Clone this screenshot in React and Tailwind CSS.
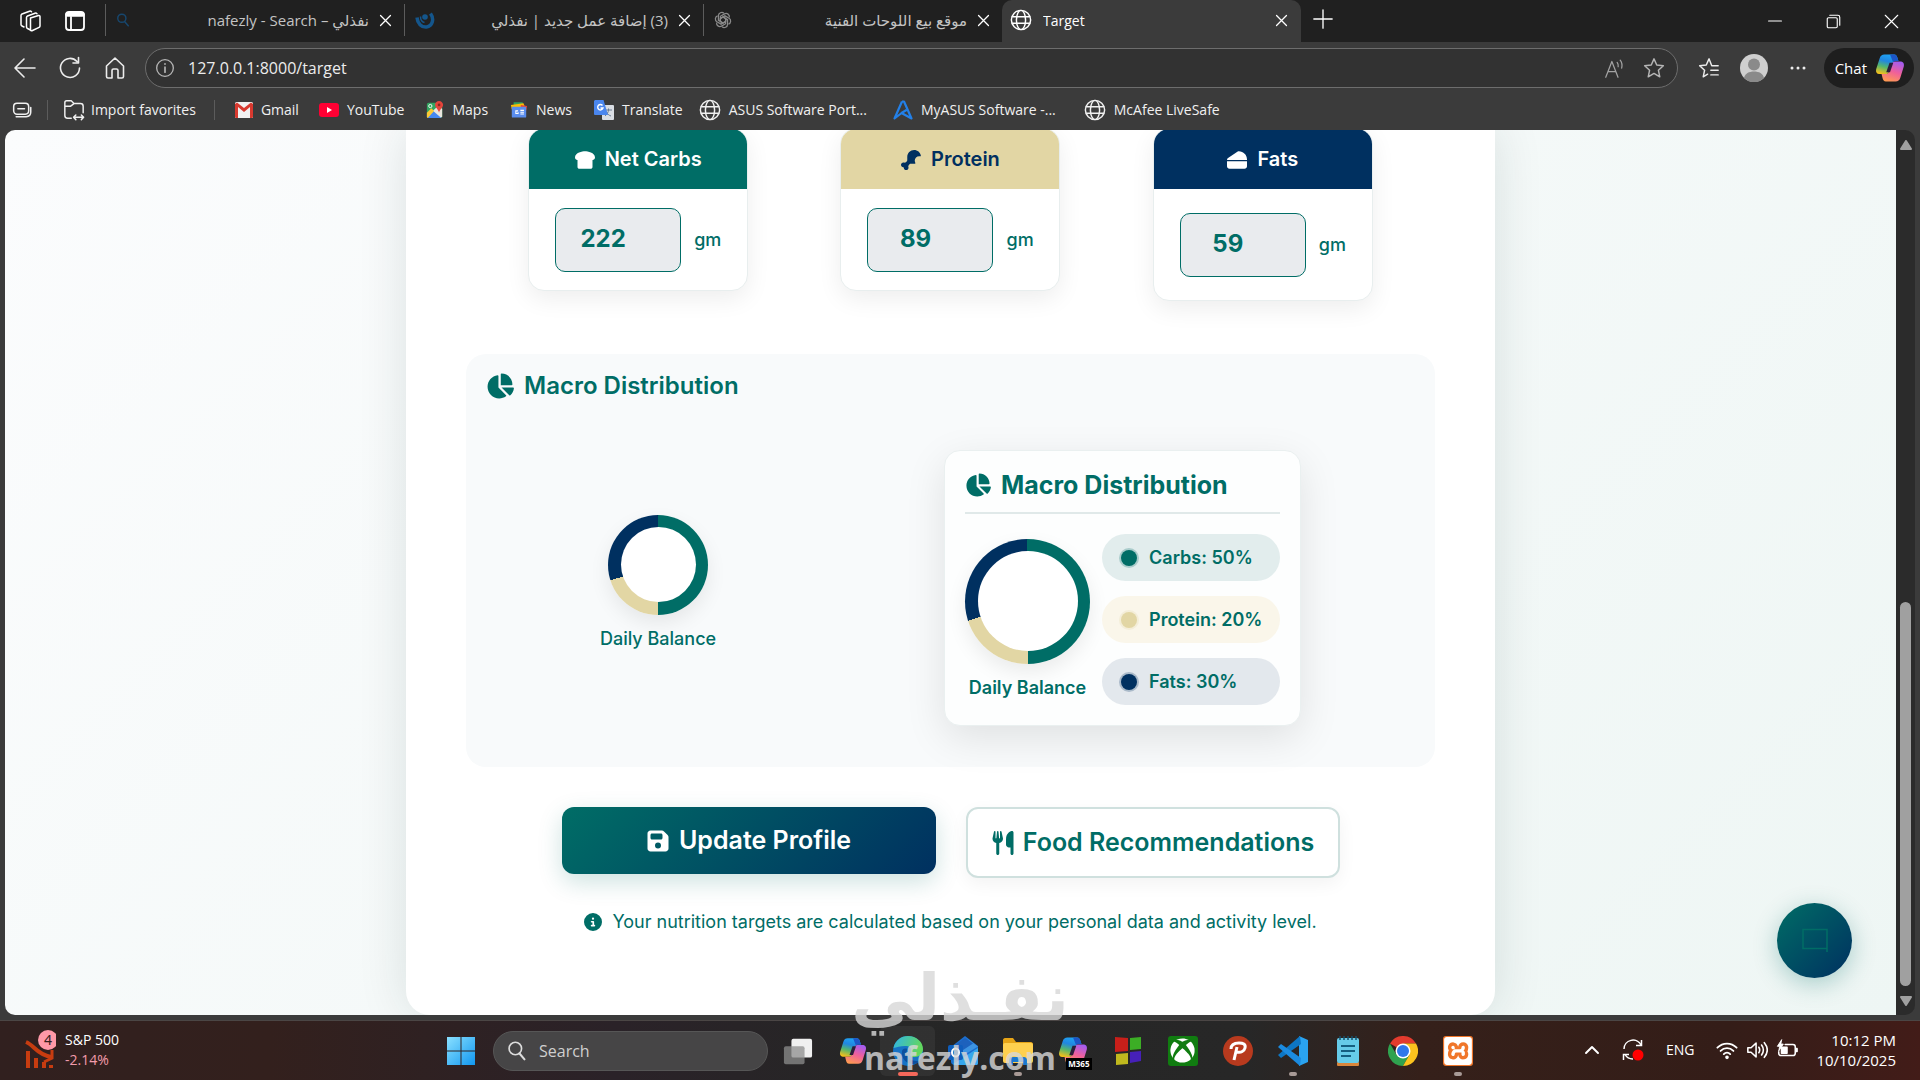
import React, { useState } from "react";
import {
  FaBreadSlice,
  FaDrumstickBite,
  FaCheese,
  FaChartPie,
  FaFloppyDisk,
  FaUtensils,
  FaCircleInfo,
  FaXbox,
} from "react-icons/fa6";
import { SiXampp } from "react-icons/si";

/* ---------- browser icons ---------- */

const Line = ({ size = 22, width = 1.4, className = "", children }) => (
  <svg
    width={size}
    height={size}
    viewBox="0 0 24 24"
    fill="none"
    stroke="currentColor"
    strokeWidth={width}
    strokeLinecap="round"
    strokeLinejoin="round"
    className={`shrink-0 ${className}`}
  >
    {children}
  </svg>
);

const GlobeIcon = () => (
  <Line size={22} width={1.6}>
    <circle cx="12" cy="12" r="10.500" />
    <ellipse cx="12" cy="12" rx="5" ry="10.500" />
    <path d="M2.500 8.500h19M2.500 15.500h19" />
  </Line>
);

const CloseIcon = ({ size = 17 }) => (
  <Line size={size} width={1.8}>
    <path d="M5 5l14 14M19 5L5 19" />
  </Line>
);

const WorkspacesIcon = () => (
  <Line size={24} width={1.5}>
    <path d="M12.500 9l8-2.500c.8-.2 1.500.3 1.500 1v9.500c0 .6-.3 1-.9 1.300l-7.100 3.400c-.8.3-1.500 0-1.500-.9z" />
    <path d="M12.500 21l-3-1.500c-.8-.4-1-.8-1-1.500V8.500c0-.8.4-1.200 1-1.500l7.500-2.800c.8-.3 1.500 0 2 .5" />
    <path d="M6 18l-2-1c-.8-.4-1-.8-1-1.500V6.500c0-.8.4-1.200 1-1.500l7.500-2.800c.8-.3 1.500 0 2 .5" />
  </Line>
);

const TabActionsIcon = () => (
  <Line size={24} width={1.8}>
    <rect x="3" y="3" width="18" height="18" rx="3" />
    <path d="M4.500 5.500h15" strokeWidth="4.500" />
    <path d="M8 8v13" />
  </Line>
);

const CopilotIcon = ({ size = 32, id }) => (
  <svg width={size} height={size} viewBox="0 0 32 32" className="shrink-0">
    <defs>
      <linearGradient id={`${id}a`} x1="0.600" y1="0" x2="0.300" y2="1">
        <stop offset="0" stopColor="#1fa5f5" />
        <stop offset="0.350" stopColor="#2186e0" />
        <stop offset="0.650" stopColor="#55b66c" />
        <stop offset="1" stopColor="#f2c01c" />
      </linearGradient>
      <linearGradient id={`${id}b`} x1="0.700" y1="0" x2="0.300" y2="1">
        <stop offset="0" stopColor="#a45cf0" />
        <stop offset="0.500" stopColor="#f0609a" />
        <stop offset="1" stopColor="#ff9a52" />
      </linearGradient>
    </defs>
    <path d="M15.500 1.500h5c2 0 2.800 1.500 3.400 3.500L25 8.500h-3.500c-1.500 0-2.500 1-3 2.500L15 20c-.6 1.800-1.600 2.500-3.200 2.500H5.500c-3.500 0-5-2-4.200-5.500L5 5.500c.8-2.700 2.500-4 5-4z" fill={`url(#${id}a)`} />
    <path d="M16.500 30.500h-5c-2 0-2.800-1.500-3.400-3.500L7 22.500h4.500c1.800 0 2.900-1 3.500-2.500l2.800-8.500c.5-1.500 1.500-2.500 3.500-2.500h5.200c3.500 0 5 2 4.200 5.500L27 26.500c-.8 2.700-2.500 4-5 4z" fill={`url(#${id}b)`} />
    <path d="M15.500 10.500h4l-3.500 10h-4z" fill="#2b1d3b" />
    <path d="M16 1.500h4.500c2 0 2.800 1.500 3.400 3.500L25 8.500h-3.500c-1 0-1.800.4-2.300 1z" fill="#1c56c8" />
  </svg>
);

const GmailIcon = () => (
  <svg width="18" height="16" viewBox="0 0 18 16" className="shrink-0">
    <rect width="18" height="16" rx="1.500" fill="#f1f1f1" />
    <path d="M0 2v12.500c0 .8.600 1.500 1.500 1.500H3V5l6 5 6-5v11h1.500c.9 0 1.500-.7 1.500-1.500V2L16 .5 9 6 2 .5z" fill="#d8392f" />
  </svg>
);

const YouTubeIcon = () => (
  <svg width="20" height="14" viewBox="0 0 20 14" className="shrink-0">
    <rect width="20" height="14" rx="3" fill="#ff0033" />
    <path d="M8 4l5 3-5 3z" fill="#fff" />
  </svg>
);

const MapsIcon = () => (
  <svg width="18" height="18" viewBox="0 0 20 20" className="shrink-0">
    <rect x="1" y="2" width="17" height="17" rx="2" fill="#33a561" />
    <path d="M1 17L14 5l4 4v8.500L16 19H3z" fill="#e9e6de" />
    <path d="M8 11l9 8H1z" fill="#4688f1" />
    <path d="M1 13l5-5 3 3-7 8-1-1z" fill="#fcc934" />
    <path d="M14.500 0C17 0 19 2 19 4.300c0 3-3.500 4.700-4.500 8.700-1-4-4.500-5.700-4.500-8.700C10 2 12 0 14.500 0z" fill="#e5443b" />
    <circle cx="14.500" cy="4.400" r="1.500" fill="#8c2a22" />
    <circle cx="4.800" cy="5.600" r="1.800" fill="none" stroke="#fff" />
  </svg>
);

const NewsIcon = () => (
  <svg width="18" height="17" viewBox="0 0 20 18" className="shrink-0">
    <path d="M4 1h10l1 5H4z" fill="#34a060" />
    <path d="M1 4l14-2 2 5-15 2z" fill="#fbbc04" />
    <path d="M12 4l7 1-1 5h-6z" fill="#ea4335" />
    <rect x="2" y="6" width="16" height="12" rx="1" fill="#5a8dee" />
    <path d="M9 10.500H6.500v3H9v-1.500M11.500 10h4M11.500 12h4M11.500 14h4" stroke="#fff" fill="none" strokeWidth="1.200" />
  </svg>
);

const TranslateIcon = () => (
  <svg width="20" height="20" viewBox="0 0 20 20" className="shrink-0">
    <rect x="8" y="5" width="12" height="15" rx="1" fill="#d9dde3" />
    <path d="M11 10h7M14.500 8.500V10c0 2-1.500 4.500-3.500 6M12.500 12c.8 1.800 2.500 3.500 4.500 4" stroke="#6a7d92" fill="none" />
    <path d="M1 0h8.500L14 15H1a1 1 0 01-1-1V1z" fill="#4a86ee" />
    <path d="M8.500 5.500A2.700 2.700 0 109 8H6.500" stroke="#fff" strokeWidth="1.400" fill="none" />
  </svg>
);

const AsusIcon = () => (
  <svg width="20" height="20" viewBox="0 0 20 20" className="shrink-0">
    <path d="M9 1.500L1.500 18.500l6.500-5M9 1.500h2l7.500 17-10-5.500 5-3" fill="none" stroke="#2380e8" strokeWidth="2.200" strokeLinejoin="round" />
  </svg>
);

/* ---------- tabs ---------- */

const tabs = [
  {
    title: "nafezly - Search – نفذلي",
    dir: "ltr",
    icon: (
      <Line size={14} width={2.5} className="text-[#17476e]">
        <circle cx="10" cy="9" r="7" />
        <path d="M15 15l6 7" />
      </Line>
    ),
  },
  {
    title: "(3) إضافة عمل جديد | نفذلي",
    dir: "rtl",
    icon: (
      <svg width="20" height="20" viewBox="0 0 20 20" className="shrink-0">
        <path d="M2 7.500c.5 6 4.500 10 9.500 9.500 6-.7 8-8 4-13.500" stroke="#14568c" strokeWidth="3.500" fill="none" />
        <path d="M5.500 6.500c0 3 1.500 5.500 4 6" stroke="#14568c" strokeWidth="1.500" fill="none" />
        <circle cx="10" cy="7" r="2.800" fill="#14568c" />
      </svg>
    ),
  },
  {
    title: "موقع بيع اللوحات الفنية",
    dir: "rtl",
    icon: (
      <svg width="18" height="18" viewBox="0 0 24 24" fill="none" stroke="#8a8a8a" strokeWidth="1.700" className="shrink-0">
        {[0, 60, 120, 180, 240, 300].map((deg) => (
          <path key={deg} d="M8.500 14V7l5.500-3.200a4.500 4.500 0 016.500 4.700M8.500 10l3.500-2 3.500 2" transform={`rotate(${deg} 12 12)`} />
        ))}
      </svg>
    ),
  },
];

const TabStrip = () => (
  <div className="flex h-[42px] shrink-0 items-stretch bg-[#202020] text-[14px] text-[#c4c4c4]">
    <div className="flex w-[105px] shrink-0 items-center gap-[21px] pl-[18px] text-white">
      <button aria-label="Workspaces"><WorkspacesIcon /></button>
      <button aria-label="Tab actions"><TabActionsIcon /></button>
    </div>
    {tabs.map((tab) => (
      <div key={tab.title} className="flex h-10 w-full max-w-[299px] items-center">
        <div className="h-8 w-px bg-[#5c5c5c]" />
        <div className="flex min-w-0 flex-1 items-center gap-[8px] pr-[10px] pl-[10px]">
          {tab.icon}
          <span dir={tab.dir} className="min-w-0 flex-1 truncate text-right text-[15px]">{tab.title}</span>
          <button aria-label="Close tab" className="text-white"><CloseIcon /></button>
        </div>
      </div>
    ))}
    <div className="flex w-full max-w-[299px] items-center gap-[11px] rounded-t-[10px] bg-[#3b3b3b] pr-[11px] pb-[2px] pl-2 text-white">
      <GlobeIcon />
      <span className="flex-1 truncate">Target</span>
      <button aria-label="Close tab"><CloseIcon /></button>
    </div>
    <button aria-label="New tab" className="px-3 pb-1 text-white">
      <Line size={20} width={1.6}><path d="M12 1v22M1 12h22" /></Line>
    </button>
    <div className="ml-auto flex text-white">
      <button aria-label="Minimize" className="flex w-[58px] items-center justify-center">
        <Line size={14} width={2}><path d="M1 12h22" /></Line>
      </button>
      <button aria-label="Restore" className="flex w-[58px] items-center justify-center">
        <Line size={15} width={1.8}>
          <rect x="2" y="6" width="16" height="16" rx="2" />
          <path d="M6 2h13c2 0 3 1 3 3v13" />
        </Line>
      </button>
      <button aria-label="Close" className="flex w-[58px] items-center justify-center">
        <Line size={15} width={1.8}><path d="M2 2l20 20M22 2L2 22" /></Line>
      </button>
    </div>
  </div>
);

/* ---------- toolbar ---------- */

const Toolbar = () => {
  const [url, setUrl] = useState("127.0.0.1:8000/target");

  return (
    <div className="flex h-[52px] shrink-0 items-center pr-[6px] pl-[13px] text-[#ececec]">
      <div className="flex w-[132px] shrink-0 items-center gap-[21px]">
        <button aria-label="Back">
          <Line size={24} width={1.6}><path d="M22 12H2.500M11 3l-9 9 9 9" /></Line>
        </button>
        <button aria-label="Refresh">
          <Line size={24} width={1.6}><path d="M21.500 12A9.500 9.500 0 1119 5.500M20.500 1.500V7H15" /></Line>
        </button>
        <button aria-label="Home">
          <Line size={24} width={1.6}><path d="M3.500 10L12 2l8.500 8v10.500c0 .8-.7 1.500-1.500 1.500h-4v-7.500c0-.8-.7-1.500-1.500-1.500h-3c-.8 0-1.500.7-1.500 1.500V22H5c-.8 0-1.500-.7-1.500-1.500z" /></Line>
        </button>
      </div>
      <div className="flex h-10 flex-1 items-center rounded-full border border-[#6d6d6d] bg-[#323232] pr-3 pl-[9px]">
        <Line size={20} width={1.6} className="text-[#b5b5b5]">
          <circle cx="12" cy="12" r="10" />
          <path d="M12 11v6M12 7v.5" strokeWidth="2" />
        </Line>
        <input
          aria-label="Address"
          value={url}
          onChange={(e) => setUrl(e.target.value)}
          className="mx-[13px] min-w-0 flex-1 bg-transparent text-base outline-none"
        />
        <button aria-label="Read aloud" className="mr-[18px] text-[#a3a3a3]">
          <Line size={21}><path d="M2 22L9 4l7 18M4.500 15.500h9M15 5c1.200 1.500 1.500 3 1.200 5M18.500 2.500c2 2.500 2.500 5.500 1.700 9" /></Line>
        </button>
        <button aria-label="Add to favorites" className="text-[#b5b5b5]">
          <Line width={1.6}><path d="M12 2l3 6.700 7.200.8-5.400 4.900 1.500 7.200-6.300-3.700-6.300 3.700 1.500-7.200L1.800 9.500 9 8.700z" /></Line>
        </button>
      </div>
      <div className="flex shrink-0 items-center pl-5">
        <button aria-label="Favorites">
          <Line width={1.6}><path d="M22 9.500h-7L12 2 9 8.700l-7.200.8 5.400 4.900-1.500 7.200 4.800-2.800M14 14.500h8M14 19.500h8" /></Line>
        </button>
        <button aria-label="Profile" className="mr-5 ml-5">
          <svg width="28" height="28" viewBox="0 0 28 28">
            <circle cx="14" cy="14" r="14" fill="#cfcfcf" />
            <circle cx="14" cy="10.500" r="6" fill="#8a8a8a" />
            <path d="M4 24c1-4.500 5-6.500 10-6.500S23 19.500 24 24a14 14 0 01-20 0z" fill="#8a8a8a" />
          </svg>
        </button>
        <button aria-label="Settings and more" className="mr-4">
          <svg width="20" height="20" viewBox="0 0 20 20" fill="currentColor">
            <circle cx="4" cy="10" r="1.500" /><circle cx="10" cy="10" r="1.500" /><circle cx="16" cy="10" r="1.500" />
          </svg>
        </button>
        <button className="flex h-10 items-center gap-2 rounded-full bg-[#1e1e1e] pr-[9px] pl-[11px] text-[15px] text-white">
          Chat
          <CopilotIcon id="chat" size={30} />
        </button>
      </div>
    </div>
  );
};

const bookmarks = [
  { label: "Gmail", icon: <GmailIcon />, gap: "ml-5" },
  { label: "YouTube", icon: <YouTubeIcon />, gap: "ml-5" },
  { label: "Maps", icon: <MapsIcon />, gap: "ml-[22px]" },
  { label: "News", icon: <NewsIcon />, gap: "ml-[22px]" },
  { label: "Translate", icon: <TranslateIcon />, gap: "ml-[22px]" },
  { label: "ASUS Software Port...", icon: <GlobeIcon />, gap: "ml-4" },
  { label: "MyASUS Software -...", icon: <AsusIcon />, gap: "ml-[26px]" },
  { label: "McAfee LiveSafe", icon: <GlobeIcon />, gap: "ml-7" },
];

const BookmarksBar = () => (
  <nav className="flex h-9 shrink-0 items-center pb-[5px] pl-3 text-[14px] whitespace-nowrap text-[#f0f0f0]">
    <button aria-label="Browser essentials">
      <Line size={20} width={1.8}>
        <rect x="2" y="4" width="18" height="13" rx="4" />
        <path d="M7 10.500h8M5 20h12c3.500 0 5.500-2 5.500-5.500V9" />
      </Line>
    </button>
    <div className="mx-[15px] h-5 w-px bg-[#5c5c5c]" />
    <button className="flex items-center gap-[6px]">
      <Line size={22} width={1.6}>
        <path d="M9 21H5c-1.700 0-3-1.300-3-3V4c0-1 .7-2 2-2h5l3 3h7c1.700 0 3 1.300 3 3v7M2 8h6l4-3M12 20h10M14 17.500L11.500 20l2.500 2.500M20 17.500l2.500 2.500-2.500 2.500" />
      </Line>
      Import favorites
    </button>
    <div className="ml-[18px] h-5 w-px bg-[#5c5c5c]" />
    {bookmarks.map((b) => (
      <a key={b.label} href="#" className={`flex items-center gap-2 ${b.gap}`}>
        {b.icon}
        {b.label}
      </a>
    ))}
  </nav>
);

/* ---------- target page ---------- */

const macros = [
  { id: "carbs", name: "Net Carbs", grams: 222, Icon: FaBreadSlice, head: "bg-[#006d66] text-white", body: "pt-5 pb-[18px]" },
  { id: "protein", name: "Protein", grams: 89, Icon: FaDrumstickBite, head: "bg-[#e2d6a4] text-[#003060]", body: "pt-5 pb-[18px]" },
  { id: "fats", name: "Fats", grams: 59, Icon: FaCheese, head: "bg-[#003060] text-white", body: "pt-[25px] pb-[23px]" },
];

const legend = [
  { label: "Carbs: 50%", pill: "bg-[#e2eded]", dot: "bg-[#006d66] ring-[#006d66]/25" },
  { label: "Protein: 20%", pill: "bg-[#faf6ea]", dot: "bg-[#e2d6a4] ring-[#e2d6a4]/25" },
  { label: "Fats: 30%", pill: "bg-[#e3e8ed]", dot: "bg-[#003060] ring-[#003060]/25" },
];

const MacroCard = ({ macro }) => {
  const { id, name, grams, Icon, head, body } = macro;
  return (
    <div className="w-[220px] overflow-hidden rounded-2xl border border-[#e8eeee] bg-white shadow-[0_8px_24px_rgba(0,0,0,0.07)]">
      <label htmlFor={id} className={`-m-px flex items-center justify-center gap-[10px] pt-4 pb-[14px] text-xl leading-[31px] font-semibold ${head}`}>
        <Icon className="size-5" />
        {name}
      </label>
      <div className={`flex items-center px-[26px] ${body}`}>
        <input
          id={id}
          readOnly
          value={grams}
          className="h-16 w-[126px] rounded-[10px] border border-[#006d66] bg-[#e9ebee] pr-[38px] pb-1 pl-2 text-center text-2xl font-bold text-[#006d66] outline-none"
        />
        <span className="ml-[13px] text-lg font-medium">gm</span>
      </div>
    </div>
  );
};

const Donut = ({ size, hole }) => (
  <div className={`flex items-center justify-center rounded-full bg-[conic-gradient(#006d66_0_50%,#e2d6a4_50%_70%,#003060_70%)] shadow-[0_8px_20px_rgba(0,0,0,0.08)] ${size}`}>
    <div className={`rounded-full bg-white ${hole}`} />
  </div>
);

const TargetPage = () => (
  <main className="relative flex flex-1 flex-col overflow-hidden rounded-l-[10px] bg-[linear-gradient(135deg,#fbfcfd,#eef6f4)] font-['Inter',sans-serif] text-[#006d66]">
    <div className="mx-auto -mt-[2px] w-full max-w-[1089px] flex-1 rounded-b-[24px] bg-white px-[60px] shadow-[0_0_50px_rgba(0,40,40,0.12)]">
      <div className="grid grid-cols-3 items-start justify-items-center px-4">
        {macros.map((m) => <MacroCard key={m.id} macro={m} />)}
      </div>

      <section className="mt-[53px] rounded-[20px] bg-[#f8fafb] px-5 pt-[14px] pb-[41px]">
        <h2 className="flex items-center gap-[10px] text-2xl leading-9 font-semibold">
          <FaChartPie className="size-7" />
          Macro Distribution
        </h2>
        <div className="mt-[46px] flex items-center justify-around">
          <div className="flex flex-col items-center pb-[10px]">
            <Donut size="size-[100px]" hole="size-[75px]" />
            <p className="mt-[10px] text-lg leading-[27px] font-medium">Daily Balance</p>
          </div>
          <div className="w-[357px] rounded-2xl border border-[#eaf0f0] bg-[#fdfefe] px-5 pb-5 shadow-[0_12px_40px_rgba(0,0,0,0.1)]">
            <h3 className="flex items-center gap-[10px] border-b-2 border-[#e0e9e9] pt-4 pb-[9px] text-[25px] leading-9 font-bold">
              <FaChartPie className="size-[26px]" />
              Macro Distribution
            </h3>
            <div className="mt-5 flex items-center gap-3">
              <div className="flex flex-col items-center">
                <Donut size="size-[125px]" hole="size-[100px]" />
                <p className="mt-[10px] text-lg leading-[27px] font-semibold whitespace-nowrap">Daily Balance</p>
              </div>
              <ul className="flex flex-1 flex-col gap-[15px]">
                {legend.map((item) => (
                  <li key={item.label} className={`flex h-[47px] items-center gap-3 rounded-full pl-[19px] text-lg font-semibold whitespace-nowrap ${item.pill}`}>
                    <span className={`size-4 shrink-0 rounded-full ring-2 ${item.dot}`} />
                    {item.label}
                  </li>
                ))}
              </ul>
            </div>
          </div>
        </div>
      </section>

      <div className="mt-10 flex items-start justify-center gap-[30px] text-[25px] font-semibold whitespace-nowrap">
        <button className="flex h-[67px] w-[374px] items-center justify-center gap-[9px] rounded-xl bg-[linear-gradient(135deg,#006d66,#003060)] text-white shadow-[0_8px_24px_rgba(0,109,102,0.2)]">
          <FaFloppyDisk className="size-6" />
          Update Profile
        </button>
        <button className="flex h-[71px] w-[374px] items-center justify-center gap-2 rounded-xl border-2 border-[#cfe0de] bg-white shadow-[0_6px_18px_rgba(0,0,0,0.05)]">
          <FaUtensils className="size-6" />
          Food Recommendations
        </button>
      </div>
      <p className="mt-[30px] flex items-center justify-center gap-[10px] text-lg leading-[27px]">
        <FaCircleInfo className="size-[18px]" />
        Your nutrition targets are calculated based on your personal data and activity level.
      </p>
    </div>

    <button aria-label="Chat" className="absolute right-11 bottom-[37px] flex size-[75px] items-center justify-center rounded-full bg-[linear-gradient(135deg,#006d66,#003060)] shadow-[0_6px_24px_rgba(0,109,102,0.3)]">
      <svg width="28" height="28" viewBox="0 0 28 28" fill="none" stroke="#006d66" strokeWidth="1.500">
        <path d="M26 25V2.500H2v19h24" />
      </svg>
    </button>
  </main>
);

const Scrollbar = () => (
  <div className="flex w-[19px] shrink-0 flex-col items-center rounded-r-[10px] bg-[#2b2b2b] text-[#a0a0a0]">
    <svg width="14" height="10" viewBox="0 0 14 10" className="mt-[10px] mb-[10px]"><path d="M7 1l5 8H2z" fill="currentColor" stroke="currentColor" strokeLinejoin="round" strokeWidth="2" /></svg>
    <div className="flex-[447]" />
    <div className="w-[11px] flex-[389] rounded-full bg-[#a0a0a0]" />
    <svg width="14" height="10" viewBox="0 0 14 10" className="mt-[10px] mb-[9px]"><path d="M7 9L2 1h10z" fill="currentColor" stroke="currentColor" strokeLinejoin="round" strokeWidth="2" /></svg>
  </div>
);

/* ---------- taskbar ---------- */

const apps = [
  {
    name: "Task view",
    icon: (
      <svg width="30" height="30" viewBox="0 0 32 32">
        <rect x="9" y="3" width="22" height="20" rx="2" fill="#f0f0f0" />
        <rect x="1" y="11" width="22" height="19" rx="2" fill="#8d8d8d" fillOpacity="0.750" />
      </svg>
    ),
  },
  { name: "Copilot", icon: <CopilotIcon id="task" size={28} /> },
  {
    name: "Edge",
    active: true,
    icon: (
      <svg width="32" height="32" viewBox="0 0 32 32">
        <defs>
          <linearGradient id="edge1" x1="0" y1="0" x2="1" y2="0.300">
            <stop offset="0" stopColor="#2fb5e8" />
            <stop offset="1" stopColor="#62d75c" />
          </linearGradient>
        </defs>
        <circle cx="16" cy="16" r="15" fill="#1673c6" />
        <path d="M1.500 13C3 5.500 9 1 16 1c8.500 0 15 6 15 13 0 5-4 8-8.500 8-4 0-5-2-4-3.500 2-3 .5-7-4-7.500-5-.5-10 1.500-13 2z" fill="url(#edge1)" />
        <path d="M10 16c-1 7 4 13 11 13 4 0 6-2 7.500-4-4 2-13 1-14-7 0-2 .5-3 1-4-3-1-5 0-5.500 2z" fill="#0d4f9e" />
      </svg>
    ),
  },
  {
    name: "Outlook",
    icon: (
      <svg width="32" height="32" viewBox="0 0 32 32">
        <path d="M4 12L18 1l13 10v17c0 1.500-1 2-2 2H8c-2 0-4-1-4-3z" fill="#1b6fd0" />
        <path d="M8 10l10-7 10 7-12 9z" fill="#1d62bd" />
        <path d="M18 2l13 9.500L17 20l-4-3 13-8.500z" fill="#3d94e2" />
        <path d="M6 29l25-16v15c0 1.500-1 2-2 2H8z" fill="#35a7ee" />
        <rect x="1" y="10" width="15" height="15" rx="2" fill="#0f5ebd" />
        <ellipse cx="8.500" cy="17.500" rx="3.500" ry="4" fill="none" stroke="#fff" strokeWidth="2" />
      </svg>
    ),
  },
  {
    name: "File Explorer",
    running: true,
    icon: (
      <svg width="32" height="32" viewBox="0 0 32 32">
        <path d="M1 5c0-1 .8-2 2-2h8l3 4h15c1 0 2 1 2 2v5H1z" fill="#e6a417" />
        <rect x="1" y="8" width="30" height="20" rx="2" fill="#ffd04f" />
        <path d="M7 30v-5c0-2 1.500-3 3-3h12c1.500 0 3 1 3 3v5h-4v-3H11v3z" fill="#1a78d0" />
      </svg>
    ),
  },
  {
    name: "Microsoft 365",
    icon: (
      <span className="relative">
        <CopilotIcon id="m365" size={30} />
        <span className="absolute -right-1 -bottom-1 bg-black px-[2px] text-[8px] leading-[12px] font-bold text-white">M365</span>
      </span>
    ),
  },
  {
    name: "Blocks",
    icon: (
      <svg width="28" height="30" viewBox="0 0 28 30">
        <path d="M1 1l13 1v13l-13 1z" fill="#c81f1a" />
        <path d="M16 2l11-1v12l-11 1z" fill="#3cae25" />
        <path d="M2 18l12-1v11l-12 1z" fill="#c0b91e" />
        <path d="M16 16l11-1v10l-11 2z" fill="#4620b8" />
      </svg>
    ),
  },
  {
    name: "Xbox",
    icon: (
      <span className="flex size-[30px] items-center justify-center rounded-[3px] bg-[#107c10] text-white">
        <FaXbox className="size-[25px]" />
      </span>
    ),
  },
  {
    name: "PicsArt",
    icon: (
      <svg width="30" height="30" viewBox="0 0 30 30">
        <circle cx="15" cy="15" r="15" fill="#b83a1e" />
        <path d="M11 24l3-13M8 13c0-4 3-6 8-6 4 0 7 1 6 5-.7 3-4 5-8 4" fill="none" stroke="#fff" strokeWidth="3" />
      </svg>
    ),
  },
  {
    name: "VS Code",
    running: true,
    icon: (
      <svg width="32" height="32" viewBox="0 0 32 32">
        <path d="M22 1l9 4v22l-9 4z" fill="#2aa3f0" />
        <path d="M23 1L1 20l3 3L24 9z" fill="#0d76c4" />
        <path d="M23 31L1 12l3-3 20 14z" fill="#1b8be0" />
      </svg>
    ),
  },
  {
    name: "Notepad",
    icon: (
      <svg width="24" height="32" viewBox="0 0 24 32">
        <rect x="1" y="27" width="22" height="4" rx="1" fill="#d9853b" />
        <rect x="1" y="3" width="22" height="25" rx="2" fill="#66cbe8" />
        <path d="M4 1v4M8 1v4M12 1v4M16 1v4M20 1v4" stroke="#17506b" strokeWidth="1.500" />
        <path d="M5 11h14M5 16h14M5 21h10" stroke="#155f80" strokeWidth="2" />
      </svg>
    ),
  },
  {
    name: "Chrome",
    icon: (
      <svg width="30" height="30" viewBox="0 0 30 30">
        <path d="M15 15L2 7.500A15 15 0 0128 7.500H15z" fill="#e33b2e" />
        <path d="M15 15l-6.500 3.700L2 7.500A15 15 0 0015 30l6.500-11.300z" fill="#2fa24f" />
        <path d="M15 7.500h13A15 15 0 0115 30l6.500-11.300z" fill="#fcc31e" />
        <circle cx="15" cy="15" r="7.500" fill="#fff" />
        <circle cx="15" cy="15" r="6" fill="#2f77ea" />
      </svg>
    ),
  },
  {
    name: "XAMPP",
    running: true,
    icon: (
      <span className="flex size-[30px] items-center justify-center rounded-[3px] bg-[#f0762a] text-white">
        <SiXampp className="size-[28px]" />
      </span>
    ),
  },
];

const Taskbar = () => (
  <footer className="relative flex h-[60px] shrink-0 items-center border-t border-[#4b4645] bg-[linear-gradient(90deg,#31201f_0%,#33201d_14%,#2a2228_32%,#262626_45%,#272727_65%,#35201a_74%,#341d18_90%,#421c18_100%)] text-[15px] text-white">
    <button className="flex items-center gap-[9px] pb-[2px] pl-6 text-left text-[14px] leading-5">
      <svg width="32" height="40" viewBox="0 0 32 40">
        <path d="M2 12c8 3 10 12 25 15" fill="none" stroke="#c73c10" strokeWidth="4" />
        <path d="M28 20v8l-8 4" fill="none" stroke="#c73c10" strokeWidth="3" />
        <path d="M4 21v17M12 28v10M20 32v6M27 35v3" stroke="#c73c10" strokeWidth="4" />
        <circle cx="24" cy="10" r="10" fill="#ff99a8" />
        <text x="24" y="15" textAnchor="middle" fontSize="14" fill="#33201d" className="font-['Noto_Sans',sans-serif]">4</text>
      </svg>
      <span>
        S&amp;P 500
        <span className="block text-[#f29bab]">-2.14%</span>
      </span>
    </button>

    <div className="absolute inset-y-0 left-[433px] flex items-center">
      <button aria-label="Start" className="flex w-[55px] items-center justify-center">
        <svg width="30" height="30" viewBox="0 0 30 30">
          <defs>
            <linearGradient id="win" x1="0" y1="0" x2="1" y2="1">
              <stop offset="0" stopColor="#8ae0ff" />
              <stop offset="1" stopColor="#1197f0" />
            </linearGradient>
          </defs>
          <path d="M1 1h13.500v13.500H1zM15.500 1H29v13.500H15.500zM1 15.500h13.500V29H1zM15.500 15.500H29V29H15.500z" fill="url(#win)" />
        </svg>
      </button>
      <label className="mr-[2px] ml-[5px] flex h-10 w-[275px] items-center gap-3 rounded-full border border-[#565656] bg-[#464546] px-[13px]">
        <Line size={20} width={2} className="text-[#dcdcdc]">
          <circle cx="10" cy="9" r="7.500" />
          <path d="M15 15l6 7" strokeWidth="2.500" />
        </Line>
        <input type="text" aria-label="Search" placeholder="Search" className="w-full min-w-0 bg-transparent text-base outline-none placeholder:text-[#cfcfcf]" />
      </label>
      {apps.map((app) => (
        <button
          key={app.name}
          aria-label={app.name}
          className={`relative flex h-[50px] w-[55px] items-center justify-center ${app.active ? "rounded-md bg-white/5" : ""}`}
        >
          {app.icon}
          {app.active && <span className="absolute bottom-0 h-1 w-5 rounded-full bg-[#f5685a]" />}
          {app.running && <span className="absolute bottom-0 h-1 w-2 rounded-full bg-[#a89a96]" />}
        </button>
      ))}
    </div>

    <div className="ml-auto flex items-center pr-6 pb-[2px]">
      <button aria-label="Hidden icons">
        <Line size={18} width={2.6}><path d="M4 16l8-8 8 8" /></Line>
      </button>
      <button aria-label="Updates" className="ml-5">
        <svg width="24" height="24" viewBox="0 0 24 24" fill="none" stroke="#fff" strokeWidth="1.500">
          <path d="M3 11a9 9 0 0117-4M20.500 2v5.500H15M12 21a9 9 0 01-8-4.500M2.500 22v-5.500H8" />
          <circle cx="17" cy="17" r="5.500" fill="#f00" stroke="none" />
        </svg>
      </button>
      <button className="ml-[21px] text-[14px]">ENG</button>
      <button aria-label="Network, sound and battery" className="ml-[22px] flex items-center gap-2">
        <Line size={22} width={2}>
          <path d="M1.500 9.500c6-6 15-6 21 0M5 13c4-4 10-4 14 0M8.500 16.500c2-2 5-2 7 0" />
          <circle cx="12" cy="20" r="1" fill="currentColor" />
        </Line>
        <Line size={22} width={1.7}>
          <path d="M2 9.500h3.500L11 4.500v15l-5.500-5H2zM14 9c1.300 2 1.300 4 0 6M17 6.500c2.500 3.500 2.500 7.500 0 11M20 4c4 5 4 11 0 16" />
        </Line>
        <Line size={22} width={1.7}>
          <path d="M10 6h8.500c1.500 0 2.500 1 2.500 2.500v7c0 1.500-1 2.500-2.500 2.500h-13C4 18 3 17 3 15.500V14M22 10.500v3h1v-3z" />
          <path d="M6 9h6v6.500H6z" fill="currentColor" />
          <path d="M6 1L1.500 8H4l-1 5 5-7.500H5.500z" fill="currentColor" strokeWidth="1" />
        </Line>
      </button>
      <div className="ml-[18px] text-right text-[15px] leading-5">
        <div>10:12 PM</div>
        <div>10/10/2025</div>
      </div>
    </div>
  </footer>
);

const Watermark = () => (
  <div aria-hidden="true" className="pointer-events-none absolute bottom-0 left-1/2 flex -translate-x-1/2 flex-col items-center font-bold text-[#d8d8d8] opacity-80">
    <span dir="rtl" className="font-['DejaVu_Sans',sans-serif] text-[64px] leading-[75px]">نفـذلي</span>
    <span className="font-['Open_Sans',sans-serif] text-[32px] leading-[44px]">nafezly.com</span>
  </div>
);

export default function App() {
  return (
    <div className="relative flex h-screen flex-col overflow-hidden bg-[#3b3b3b] font-['Open_Sans','DejaVu_Sans',sans-serif]">
      <TabStrip />
      <Toolbar />
      <BookmarksBar />
      <div className="flex min-h-0 flex-1 px-[5px] pb-[5px]">
        <TargetPage />
        <Scrollbar />
      </div>
      <Taskbar />
      <Watermark />
    </div>
  );
}
